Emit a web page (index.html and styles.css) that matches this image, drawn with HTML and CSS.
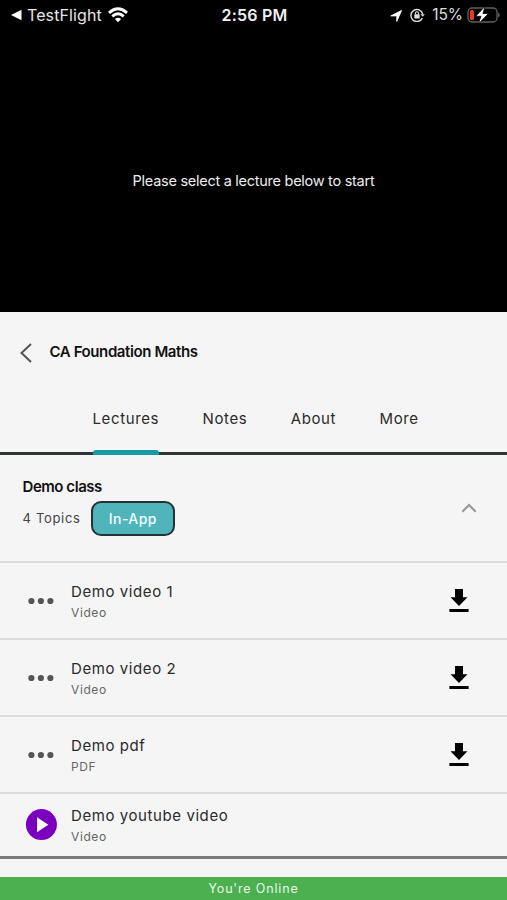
FILE: index.html
```html
<!DOCTYPE html>
<html lang="en">
<head>
<meta charset="utf-8">
<title>CA Foundation Maths</title>
<link rel="stylesheet" href="styles.css">
</head>
<body>
<svg class="defs" width="0" height="0" aria-hidden="true">
  <symbol id="download" viewBox="0 0 20 24"><path d="M6 0h8v8.300h4.500L10 17 1.500 8.300H6z"/><path d="M.4 20h19.200v3H.4z"/></symbol>
  <symbol id="dots" viewBox="0 0 26 8"><circle cx="3.400" cy="4" r="3.100"/><circle cx="12.900" cy="4" r="3.100"/><circle cx="22.400" cy="4" r="3.100"/></symbol>
</svg>
<div class="app">
  <section class="player">
    <header class="status">
      <div class="status-left">
        <svg width="11" height="12" viewBox="0 0 11 12"><path d="M0 6 10.500.8v10.400z"/></svg>
        <span class="carrier">TestFlight</span>
        <svg class="wifi" width="20" height="16" viewBox="0 0 20 16" fill="none" stroke="#fff" stroke-width="2.900"><path d="M1 5.800Q10-2.200 19 5.800"/><path d="M4.300 9.300Q10 4.300 15.700 9.300"/><path d="M6.900 12Q10 9.400 13.100 12L10 15.200z" fill="#fff" stroke="none"/></svg>
      </div>
      <div class="clock">2:56 PM</div>
      <div class="status-right">
        <svg class="location" width="12" height="12" viewBox="0 0 12 12"><path d="M11.500.5 6.800 11.400V5.900H.8z" stroke="#fff" stroke-width=".9" stroke-linejoin="round"/></svg>
        <svg class="lock" width="15" height="14" viewBox="0 0 15 14" fill="none" stroke="#ddd" stroke-width="1.400"><path d="M12.300 10.100A6 6 0 1 1 12.700 6"/><path d="m10.400 6.300 2.400 2.500 2-2.500z" fill="#ddd" stroke="none"/><rect x="4.300" y="6.200" width="5.400" height="4.200" rx=".6" fill="#ddd" stroke="none"/><path d="M5.500 6.500V5.200a1.500 1.500 0 0 1 3 0v1.300" stroke-width="1.100"/></svg>
        <span class="percent">15%</span>
        <svg class="battery" width="33" height="18" viewBox="0 0 33 18"><rect x="1" y="2" width="29" height="14" rx="4" fill="none" stroke="#606060" stroke-width="1.300"/><path d="M31 6.800q1.800.4 1.800 2.200T31 11.200z" fill="#606060"/><rect x="3" y="4" width="4" height="10" rx="1.500" fill="#f6332b"/><path d="M18.300 0 8.700 10.300h5.200L11.300 18 21.500 7.500h-5.600z" stroke="#000" stroke-width=".8"/></svg>
      </div>
    </header>
    <p class="prompt"><span>Please select a lecture below to start</span></p>
  </section>

  <div class="course">
    <svg class="back" width="12" height="20" viewBox="0 0 12 20"><path d="M11 1 1.500 10 11 19"/></svg>
    <h1>CA Foundation Maths</h1>
  </div>

  <nav class="tabs">
    <div class="tab active">Lectures</div>
    <div class="tab">Notes</div>
    <div class="tab">About</div>
    <div class="tab">More</div>
  </nav>

  <section class="group">
    <div>
      <h2>Demo class</h2>
      <div class="meta"><span class="topics">4 Topics</span><span class="badge">In-App</span></div>
    </div>
    <svg class="chevron" width="16" height="10" viewBox="0 0 16 10"><path d="M1.300 8.700 8 2l6.700 6.700"/></svg>
  </section>

  <ul class="items">
    <li>
      <div class="lead"><svg class="dots" width="26" height="8"><use href="#dots"/></svg></div>
      <div class="label"><div class="name">Demo video 1</div><div class="kind">Video</div></div>
      <svg class="download" width="20" height="24"><use href="#download"/></svg>
    </li>
    <li>
      <div class="lead"><svg class="dots" width="26" height="8"><use href="#dots"/></svg></div>
      <div class="label"><div class="name">Demo video 2</div><div class="kind">Video</div></div>
      <svg class="download" width="20" height="24"><use href="#download"/></svg>
    </li>
    <li>
      <div class="lead"><svg class="dots" width="26" height="8"><use href="#dots"/></svg></div>
      <div class="label"><div class="name">Demo pdf</div><div class="kind">PDF</div></div>
      <svg class="download" width="20" height="24"><use href="#download"/></svg>
    </li>
    <li class="last">
      <div class="lead"><svg width="33" height="32" viewBox="0 0 33 32"><circle cx="16.400" cy="15.600" r="15.500" fill="#7b00bd"/><path d="M12 8.300v15L23.300 15.800z" fill="#fff"/></svg></div>
      <div class="label"><div class="name">Demo youtube video</div><div class="kind">Video</div></div>
    </li>
  </ul>
  <footer class="online">You're Online</footer>
</div>
</body>
</html>
```

FILE: styles.css
```css
* { box-sizing: border-box; }
body {
  margin: 0;
  background: #f5f5f5;
  color: #2b2b2b;
  font-family: Inter, "Liberation Sans", sans-serif;
}
svg { display: block; flex: none; }
.defs { position: absolute; }
.app { width: 507px; height: 900px; display: flex; flex-direction: column; overflow: hidden; }
h1, h2, p, ul { margin: 0; padding: 0; }
h1, h2 { color: #111; font-weight: 600; font-size: 15px; line-height: 20px; white-space: nowrap; }

.player { height: 312px; flex: none; background: #000; color: #fff; display: flex; flex-direction: column; }
.status { height: 30px; flex: none; display: grid; grid-template-columns: 1fr auto 1fr; align-items: center; padding: 0 9px 0 11px; fill: #fff; }
.status-left, .status-right { display: flex; align-items: center; }
.status-right { justify-content: flex-end; }
.carrier { margin-left: 5px; font-size: 16px; line-height: 20px; letter-spacing: .1px; color: #e6e6e6; }
.wifi { margin-left: 6px; margin-top: -1px; }
.clock { font-size: 16px; line-height: 20px; font-weight: 600; letter-spacing: .2px; color: #f0f0f0; }
.location { margin-right: 8px; margin-top: 1px; }
.lock { margin-right: 7px; }
.percent { font-size: 15.500px; line-height: 20px; color: #ddd; letter-spacing: -.1px; margin-right: 4px; }
.battery { margin-right: -2px; }
.prompt { height: 300px; flex: none; display: flex; align-items: center; justify-content: center; font-size: 14.500px; letter-spacing: -.27px; color: #ededed; }

.course { height: 81px; flex: none; display: flex; align-items: center; padding-left: 20px; gap: 17.500px; }
.back { fill: none; stroke: #555; stroke-width: 2; }
h1 { letter-spacing: -.4px; margin-top: -1px; }

.tabs { height: 62px; flex: none; display: flex; padding-left: 92.500px; gap: 43.400px; border-bottom: 3px solid #303536; }
.tab { height: 62px; padding-top: 16px; font-size: 15px; line-height: 20px; letter-spacing: .62px; display: flex; flex-direction: column; justify-content: space-between; }
.active::after { content: ""; height: 5px; background: #159ca4; border-radius: 3px 3px 0 0; }

.group { height: 108px; flex: none; display: flex; justify-content: space-between; padding: 22px 30px 0 22.500px; border-bottom: 2px solid #dcdcdc; }
h2 { letter-spacing: -.45px; }
.meta { display: flex; align-items: center; gap: 10.300px; margin-top: 4px; }
.topics { font-size: 13px; letter-spacing: .68px; color: #444; margin-top: -1px; }
.badge { width: 84px; height: 35px; border: 2px solid #263335; border-radius: 10px; background: #4fb5ba; color: #f3ffff; display: flex; align-items: center; justify-content: center; font-size: 14px; font-weight: 500; letter-spacing: .45px; }
.chevron { margin-top: 26px; fill: none; stroke: #999; stroke-width: 2.200; }

.items { list-style: none; flex: none; }
li { height: 77px; display: flex; align-items: center; border-bottom: 2px solid #dcdcdc; padding: 0 38px 0 25px; }
.lead { width: 46px; flex: none; }
.dots { margin-left: 3px; fill: #555; }
.label { flex: 1; }
.name { font-size: 15px; line-height: 20px; letter-spacing: .58px; padding-top: 1px; }
.kind { font-size: 12px; line-height: 16px; margin-top: 3px; letter-spacing: .6px; color: #666; }
.download { fill: #000; }
.last { height: 65px; border-bottom: 3px solid #7b7b7b; }
.online { margin-top: auto; height: 23px; flex: none; background: #4caf50; color: #e9f8e9; font-size: 12.500px; line-height: 23px; letter-spacing: .85px; text-align: center; }
```
